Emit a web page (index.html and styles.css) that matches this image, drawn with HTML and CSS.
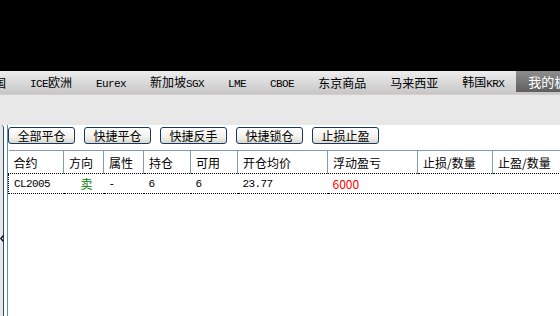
FILE: index.html
```html
<!DOCTYPE html>
<html lang="zh-CN">
<head>
    <meta charset="UTF-8">
    <title>持仓</title>
    <link rel="stylesheet" href="styles.css">
</head>
<body>
    <div class="topbar"></div>

    <nav class="tabs">
        <span class="tab first">国</span><span class="sep"></span>
        <span class="tab"><span class="en">ICE</span>欧洲</span><span class="sep"></span>
        <span class="tab"><span class="en">Eurex</span></span><span class="sep"></span>
        <span class="tab">新加坡<span class="en">SGX</span></span><span class="sep"></span>
        <span class="tab"><span class="en">LME</span></span><span class="sep"></span>
        <span class="tab"><span class="en">CBOE</span></span><span class="sep"></span>
        <span class="tab">东京商品</span><span class="sep"></span>
        <span class="tab">马来西亚</span><span class="sep"></span>
        <span class="tab">韩国<span class="en">KRX</span></span>
        <span class="tab active">我的板块</span>
    </nav>

    <div class="gap"></div>

    <div class="main">
        <div class="side">
            <svg class="arrow" width="4" height="7" viewBox="0 0 4 7">
                <path d="M3.5 0.5 L0.8 3.5 L3.5 6.5" fill="none" stroke="#000" stroke-width="1.2"/>
            </svg>
        </div>
        <div class="panel">
            <div class="toolbar">
                <button>全部平仓</button>
                <button>快捷平仓</button>
                <button>快捷反手</button>
                <button>快捷锁仓</button>
                <button>止损止盈</button>
            </div>

            <table class="positions">
                <thead>
                    <tr>
                        <th class="c-code">合约</th>
                        <th class="c-dir">方向</th>
                        <th class="c-attr">属性</th>
                        <th class="c-hold">持仓</th>
                        <th class="c-avail">可用</th>
                        <th class="c-price">开仓均价</th>
                        <th class="c-pnl">浮动盈亏</th>
                        <th class="c-stop">止损/数量</th>
                        <th class="c-take">止盈/数量</th>
                    </tr>
                </thead>
                <tbody>
                    <tr class="selected">
                        <td class="en">CL2005</td>
                        <td class="sell">卖</td>
                        <td class="en">-</td>
                        <td class="en">6</td>
                        <td class="en">6</td>
                        <td class="en">23.77</td>
                        <td class="loss">6000</td>
                        <td></td>
                        <td></td>
                    </tr>
                </tbody>
            </table>
        </div>
    </div>
</body>
</html>
```

FILE: styles.css
```css
html, body {
    height: 100%;
}
body {
    margin: 0;
    display: flex;
    flex-direction: column;
    background: #e8e8e8;
    font-family: "Noto Sans CJK SC", "Noto Sans", sans-serif;
    font-size: 12px;
    color: #000;
    overflow: hidden;
}
.en {
    font-family: "Liberation Mono", monospace;
    font-size: 11px;
    letter-spacing: -0.6px;
}
.topbar {
    height: 71px;
    background: #000;
    flex-shrink: 0;
}
.tabs {
    height: 23px;
    display: flex;
    align-items: center;
    white-space: nowrap;
    overflow: hidden;
    background: linear-gradient(#ededed, #c6c6c6);
    border-bottom: 1px solid #d6cdcd;
    flex-shrink: 0;
}
.tab {
    padding: 0 12px;
    line-height: 23px;
}
.tab.first {
    margin-left: -6px;
    padding-left: 0;
}
.sep {
    width: 1px;
    height: 11px;
    background: #8c8c8c;
}
.tab.active {
    align-self: flex-start;
    height: 21px;
    line-height: 21px;
    color: #fff;
    background: linear-gradient(#8e8e8e, #5e5e5e);
    font-size: 13px;
}
.gap {
    height: 30px;
    flex-shrink: 0;
}
.main {
    flex: 1;
    display: flex;
    background: #fff;
}
.side {
    width: 3px;
    background: #ebe7e0;
    border-right: 1px solid #1f4d7f;
    border-top-right-radius: 3px;
    padding-top: 110px;
}
.arrow {
    display: block;
}
.panel {
    flex: 1;
    margin-left: 3px;
    border-left: 1px solid #5b8bbf;
    padding-top: 2px;
    overflow: hidden;
}
.toolbar {
    display: flex;
    gap: 9px;
    height: 17px;
}
.toolbar button {
    width: 67px;
    height: 17px;
    padding: 0;
    font-family: inherit;
    font-size: 12px;
    line-height: 15px;
    color: #000;
    border: 1px solid #12396a;
    border-radius: 3px;
    background: linear-gradient(#ffffff, #f3f1ea 60%, #dcd8cc);
}
.positions {
    margin-top: 6px;
    border-collapse: collapse;
    table-layout: fixed;
    width: 559px;
}
.positions th,
.positions td {
    box-sizing: border-box;
}
.positions th {
    height: 23px;
    padding: 0 0 0 5px;
    text-align: left;
    font-weight: normal;
    border-top: 1px solid #7f9db9;
    border-right: 1px solid #7f9db9;
    border-bottom: 1px dotted #000;
    white-space: nowrap;
}
.c-code { width: 55px; }
.c-dir { width: 40px; }
.c-attr { width: 40px; }
.c-hold { width: 47px; }
.c-avail { width: 47px; }
.c-price { width: 90px; }
.c-pnl { width: 90px; }
.c-stop { width: 75px; }
.c-take { width: 75px; }
.positions td {
    height: 20px;
    padding: 0 0 0 5px;
    border-bottom: 1px dotted #000;
    white-space: nowrap;
}
.positions td:first-child {
    border-left: 1px dotted #000;
}
.positions td.sell {
    padding-left: 17px;
    color: #008000;
}
.positions td.loss {
    color: #ff0000;
}
```
